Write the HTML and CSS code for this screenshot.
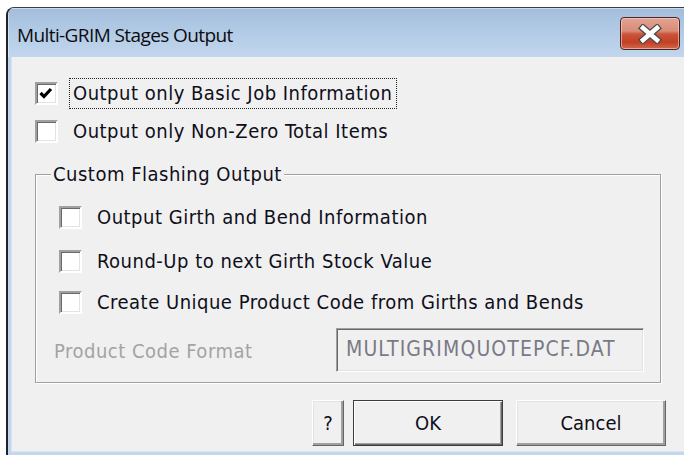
FILE: index.html
```html
<!DOCTYPE html>
<html lang="en">
<head>
<meta charset="utf-8">
<title>Multi-GRIM Stages Output</title>
<link rel="stylesheet" href="styles.css">
</head>
<body>
<div class="window">
  <div class="titlebar">
    <span class="title">Multi-GRIM Stages Output</span>
    <button class="close" type="button" aria-label="Close">
      <svg width="28" height="20" viewBox="0 0 28 20" aria-hidden="true">
        <path d="M7 4 L21 16 M21 4 L7 16" stroke="#4a4a4a" stroke-width="7" stroke-linecap="square" fill="none"/>
        <path d="M7 4 L21 16 M21 4 L7 16" stroke="#ffffff" stroke-width="4.5" stroke-linecap="square" fill="none"/>
      </svg>
    </button>
  </div>
  <div class="frame">
    <div class="client">
      <label class="check first">
        <span class="box">
          <svg width="19" height="19" viewBox="0 0 19 19" aria-hidden="true">
            <path d="M3.5 9 L7 12.5 L14 5" stroke="#000" stroke-width="3.2" fill="none"/>
          </svg>
        </span>
        <span class="caption focus">Output only Basic Job Information</span>
      </label>
      <label class="check second">
        <span class="box"></span>
        <span class="caption">Output only Non-Zero Total Items</span>
      </label>

      <fieldset class="group">
        <legend>Custom Flashing Output</legend>
        <label class="check inner g1">
          <span class="box"></span>
          <span class="caption">Output Girth and Bend Information</span>
        </label>
        <label class="check inner g2">
          <span class="box"></span>
          <span class="caption">Round-Up to next Girth Stock Value</span>
        </label>
        <label class="check inner g3">
          <span class="box"></span>
          <span class="caption">Create Unique Product Code from Girths and Bends</span>
        </label>
        <div class="format-row">
          <span class="disabled">Product Code Format</span>
          <span class="field">MULTIGRIMQUOTEPCF.DAT</span>
        </div>
      </fieldset>

      <div class="buttons">
        <button class="btn help" type="button">?</button>
        <button class="btn ok" type="button">OK</button>
        <button class="btn cancel" type="button">Cancel</button>
      </div>
    </div>
  </div>
</div>
</body>
</html>
```
FILE: styles.css
```css
html, body {
  margin: 0;
  height: 100%;
  overflow: hidden;
  background: #ffffff;
}

/* window frame */
.window {
  margin: 7px 0 0 6px;
  width: 678px;
  height: 448px;
  box-sizing: border-box;
  border-left: 2px solid #1f2226;
  border-top: 1px solid #3b3f45;
  border-top-left-radius: 8px;
  background: #c2d7ed;
  display: flex;
  flex-direction: column;
  overflow: hidden;
}

.titlebar {
  height: 49px;
  flex: none;
  display: flex;
  align-items: flex-start;
  background: linear-gradient(#a2bddc 0%, #b3cbe6 50%, #c2d7ee 100%);
  box-shadow: inset 1px 1px 0 rgba(255, 255, 255, 0.45);
}

.title {
  margin: 15px 0 0 9px;
  font: 19px/24px "Open Sans", "Noto Sans", sans-serif;
  letter-spacing: -0.6px;
  color: #0c0c10;
}

.close {
  margin: 9px 4px 0 auto;
  width: 60px;
  height: 33px;
  padding: 0;
  border: 1px solid #4a2323;
  border-radius: 4px;
  background: linear-gradient(#e2a494 0%, #d98b77 42%, #c9553c 52%, #c43f24 78%, #cf6a4c 100%);
  box-shadow: inset 0 0 0 1px rgba(255, 220, 210, 0.55);
  display: flex;
  align-items: center;
  justify-content: center;
}

.frame {
  flex: 1;
  display: flex;
  padding: 0 0 3px 3px;
}

/* dialog client area */
.client {
  flex: 1;
  background: #f0f0f0;
  border-left: 1px solid #d7e3f0;
  border-bottom: 1px solid #dbe6f2;
  padding-left: 23px;
  font: 20px/23px "DejaVu Sans Condensed", "Liberation Sans", sans-serif;
  letter-spacing: 0.5px;
  color: #0e0e1a;
}

.check {
  display: flex;
  align-items: center;
  height: 23px;
}

.first { margin-top: 25px; }
.second { margin-top: 15px; }

.box {
  width: 23px;
  height: 23px;
  box-sizing: border-box;
  flex: none;
  background: #ffffff;
  border: 2px solid;
  border-color: #a0a0a0 #ffffff #ffffff #a0a0a0;
  box-shadow: inset 1px 1px 0 #696969, inset -1px -1px 0 #e3e3e3;
  display: flex;
  align-items: center;
  justify-content: center;
}

.caption {
  margin-left: 15px;
  white-space: nowrap;
}

.focus {
  margin-left: 11px;
  padding: 3px 4px 3px 3px;
  border: 1px dotted #222;
}

/* etched group box */
.group {
  margin: 19px 0 0 0;
  width: 626px;
  box-sizing: border-box;
  padding: 20px 0 10px 0;
  min-inline-size: 0;
  border: 1px solid #a0a0a0;
  box-shadow: inset 1px 1px 0 #ffffff, 1px 1px 0 #ffffff;
}

.group legend {
  margin-left: 15px;
  padding: 0 2px;
  line-height: 24px;
  background: #f0f0f0;
}

.inner { margin-left: 23px; }
.g2 { margin-top: 21px; }
.g3 { margin-top: 18px; }

.format-row {
  display: grid;
  grid-template-columns: 282px 308px;
  align-items: center;
  margin: 14px 0 0 18px;
}

.disabled {
  color: #a3a3a3;
  padding-top: 3px;
}

.field {
  height: 44px;
  box-sizing: border-box;
  padding: 0 0 2px 9px;
  display: flex;
  align-items: center;
  background: #f0f0f0;
  color: #7a7a86;
  font-size: 21px;
  letter-spacing: 1.1px;
  border: 1px solid;
  border-color: #a0a0a0 #ffffff #ffffff #a0a0a0;
  box-shadow: inset 1px 1px 0 #696969, inset -1px -1px 0 #e3e3e3;
}

/* command buttons */
.buttons {
  display: flex;
  margin: 17px 0 0 277px;
}

.btn {
  height: 46px;
  padding: 0;
  font: inherit;
  color: #0e0e1a;
  background: #f0f0f0;
  border: 1px solid;
  border-color: #ffffff #646464 #646464 #ffffff;
  box-shadow: inset -2px -2px 0 #a0a0a0, inset 1px 1px 0 #e3e3e3;
}

.help { width: 32px; }

.ok {
  width: 150px;
  margin-left: 9px;
  border-color: #3c3c3c;
  box-shadow: inset 1px 1px 0 #ffffff, inset -1px -1px 0 #696969, inset -2px -2px 0 #a0a0a0;
}

.cancel {
  width: 150px;
  margin-left: 13px;
}
```
